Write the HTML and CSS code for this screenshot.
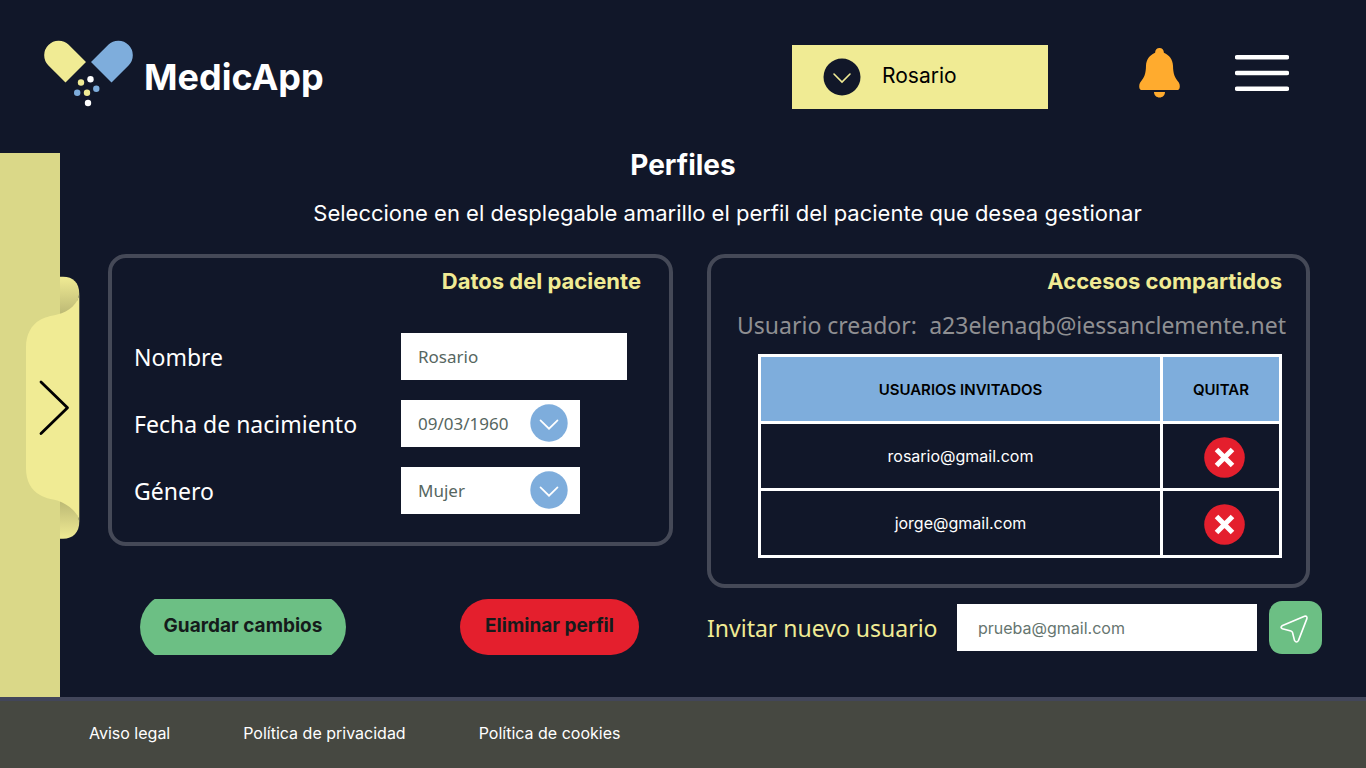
FILE: index.html
```html
<!DOCTYPE html>
<html lang="es">
<head>
<meta charset="utf-8">
<meta name="viewport" content="width=device-width, initial-scale=1">
<title>MedicApp - Perfiles</title>
<link rel="stylesheet" href="styles.css">
</head>
<body>
<header class="header">
  <a class="brand" href="#">
    <svg class="brand-logo" viewBox="44 40 90 67" aria-hidden="true">
      <path fill="#f0eb94" d="M68.7 44.7 86 62 65.5 82.5 48.2 65.2A14.5 14.5 0 0 1 68.7 44.7z"/>
      <path fill="#7eaddc" d="M108.3 44.7 91 62l20.5 20.5 17.3-17.3A14.5 14.5 0 0 0 108.3 44.7z"/>
      <circle cx="81" cy="82.5" r="3.2" fill="#f0eb94"/>
      <circle cx="90.5" cy="79.2" r="3.2" fill="#fff"/>
      <circle cx="77.2" cy="92.7" r="3.2" fill="#7eaddc"/>
      <circle cx="87" cy="92.7" r="3.2" fill="#f0eb94"/>
      <circle cx="96.3" cy="88.7" r="3.2" fill="#7eaddc"/>
      <circle cx="88" cy="103" r="3.2" fill="#fff"/>
    </svg>
    <span class="brand-name">MedicApp</span>
  </a>
  <div class="profile">
    <svg class="profile-chevron" viewBox="0 0 38 38" aria-hidden="true">
      <circle cx="19" cy="19" r="18.5" fill="#111729"/>
      <path d="M11 16l8 8 8-8" fill="none" stroke="#f0eb94" stroke-width="1.6" stroke-linecap="round"/>
    </svg>
    <select class="profile-select" aria-label="Perfil del paciente"><option>Rosario</option></select>
  </div>
  <div class="header-icons">
    <button class="icon-button" type="button" aria-label="Notificaciones">
      <svg viewBox="0 0 41 50" width="41" height="50" aria-hidden="true">
        <path fill="#ffab2e" d="M20.5 0c-2.6 0-4.4 2-4.4 4.7C10.600 7 7.300 11.500 7 17.700 6.800 26 5.500 29 1.200 34.500-.5 37 0 42 2.500 42h36c2.500 0 3-5 1.300-7.500C35.500 29 34.200 26 34 17.700c-.3-6.200-3.600-10.700-9.100-13C24.900 2 23.100 0 20.500 0z"/>
        <path fill="#ffab2e" d="M15 44h11c0 3.400-2.500 5.500-5.500 5.500S15 47.400 15 44z"/>
      </svg>
    </button>
    <button class="icon-button" type="button" aria-label="Menú">
      <svg viewBox="0 0 54 36" width="54" height="36" aria-hidden="true">
        <path d="M2 2.300h50M2 18h50M2 33.700h50" stroke="#fff" stroke-width="4.500" stroke-linecap="round"/>
      </svg>
    </button>
  </div>
</header>

<div class="shell">
  <aside class="sidebar">
    <button class="sidebar-tab" type="button" aria-label="Abrir panel lateral">
      <svg viewBox="26 276 54 263" width="54" height="263" aria-hidden="true">
        <defs>
          <linearGradient id="fold-top" x1="0" y1="0" x2="0" y2="1"><stop offset="0" stop-color="#f0eb94"/><stop offset="1" stop-color="#b9b673"/></linearGradient>
          <linearGradient id="fold-bottom" x1="0" y1="1" x2="0" y2="0"><stop offset="0" stop-color="#f0eb94"/><stop offset="1" stop-color="#b9b673"/></linearGradient>
        </defs>
        <path fill="url(#fold-top)" d="M60 276.800h3c10 0 16.300 6 16.300 17.200L75 310l-15 6z"/>
        <path fill="url(#fold-bottom)" d="M60 538.700h3c10 0 16.300-6 16.300-17.200L75 505l-15-6z"/>
        <path fill="#f0eb94" d="M79.300 294c-1 9-10 18-22 20.500C49 316.500 45 317 40 320c-9 5-14 15-14 27v121c0 13 5 22 14 27 5 3 9 3.500 17.300 5.500 11 4 21 12 22 21z"/>
        <path d="M41 382l26.500 25.700L41 433.500" fill="none" stroke="#000" stroke-width="2.800" stroke-linecap="round" stroke-linejoin="round"/>
      </svg>
    </button>
  </aside>

  <main class="main">
    <h1 class="title">Perfiles</h1>
    <p class="subtitle">Seleccione en el desplegable amarillo el perfil del paciente que desea gestionar</p>

    <div class="columns">
      <form class="patient">
        <section class="panel patient-panel">
          <h2 class="panel-title">Datos del paciente</h2>
          <div class="fields">
            <label class="label" for="name">Nombre</label>
            <input class="field field-wide" id="name" type="text" value="Rosario">
            <label class="label" for="birth">Fecha de nacimiento</label>
            <div class="picker">
              <input class="field" id="birth" type="text" value="09/03/1960">
              <button class="picker-icon" type="button" aria-label="Elegir fecha">
                <svg viewBox="0 0 38 38" width="38" height="38" aria-hidden="true"><circle cx="19" cy="19" r="18.700" fill="#7eaddc"/><path d="M10.500 16.300l8.500 8.400 8.500-8.400" fill="none" stroke="#fff" stroke-width="1.700" stroke-linecap="round"/></svg>
              </button>
            </div>
            <label class="label" for="gender">Género</label>
            <div class="picker">
              <select class="field" id="gender"><option>Mujer</option></select>
              <span class="picker-icon">
                <svg viewBox="0 0 38 38" width="38" height="38" aria-hidden="true"><circle cx="19" cy="19" r="18.700" fill="#7eaddc"/><path d="M10.500 16.300l8.500 8.400 8.500-8.400" fill="none" stroke="#fff" stroke-width="1.700" stroke-linecap="round"/></svg>
              </span>
            </div>
          </div>
        </section>
        <div class="actions">
          <button class="pill pill-save" type="submit"><span>Guardar cambios</span></button>
          <button class="pill pill-delete" type="button"><span>Eliminar perfil</span></button>
        </div>
      </form>

      <div class="sharing">
        <section class="panel sharing-panel">
          <h2 class="panel-title">Accesos compartidos</h2>
          <p class="creator"><span>Usuario creador:</span><span>a23elenaqb@iessanclemente.net</span></p>
          <table class="guests">
            <thead>
              <tr><th scope="col">USUARIOS INVITADOS</th><th class="guests-remove" scope="col">QUITAR</th></tr>
            </thead>
            <tbody>
              <tr>
                <td>rosario@gmail.com</td>
                <td><button class="icon-button remove" type="button" aria-label="Quitar rosario@gmail.com"><svg viewBox="0 0 41 41" width="41" height="41" aria-hidden="true"><circle cx="20.500" cy="20.500" r="20.300" fill="#e41f2d"/><path d="M12.500 12.500l16 16M28.500 12.500l-16 16" stroke="#fff" stroke-width="5"/></svg></button></td>
              </tr>
              <tr>
                <td>jorge@gmail.com</td>
                <td><button class="icon-button remove" type="button" aria-label="Quitar jorge@gmail.com"><svg viewBox="0 0 41 41" width="41" height="41" aria-hidden="true"><circle cx="20.500" cy="20.500" r="20.300" fill="#e41f2d"/><path d="M12.500 12.500l16 16M28.500 12.500l-16 16" stroke="#fff" stroke-width="5"/></svg></button></td>
              </tr>
            </tbody>
          </table>
        </section>
        <form class="invite">
          <label class="invite-label" for="invite">Invitar nuevo usuario</label>
          <input class="invite-input" id="invite" type="email" placeholder="prueba@gmail.com">
          <button class="invite-send" type="submit" aria-label="Enviar invitación">
            <svg viewBox="0 0 52 52" width="52" height="52" aria-hidden="true"><path d="M13 23.800 35.500 14.300q3-.8 2.400 2.300L29.500 38.400q-1.900 3.200-4 0L23.500 30.500q-.5-1.200-1.600-1.500l-8.500-2.200q-2.500-1.300-.4-3z" fill="none" stroke="#fff" stroke-width="1.600" stroke-linejoin="round"/></svg>
          </button>
        </form>
      </div>
    </div>
  </main>
</div>

<footer class="footer">
  <a href="#">Aviso legal</a>
  <a href="#">Política de privacidad</a>
  <a href="#">Política de cookies</a>
</footer>
</body>
</html>
```
FILE: styles.css
```css
:root {
  --night: #111729;
  --yellow: #f0eb94;
  --blue: #7eaddc;
  --green: #6cbf84;
  --red: #e41f2d;
  --line: #454957;
  --geometric: Inter, "Liberation Sans", sans-serif;
  --humanist: "Noto Sans", "Open Sans", sans-serif;
}

* { box-sizing: border-box; }

body {
  margin: 0;
  min-height: 100vh;
  display: flex;
  flex-direction: column;
  background: var(--night);
  color: #fff;
  font-family: var(--geometric);
}

h1, h2, p { margin: 0; }

button, input, select { font: inherit; border: 0; margin: 0; }

button { cursor: pointer; }

svg { display: block; }

.icon-button { padding: 0; background: none; }

/* Header */
.header {
  display: flex;
  align-items: flex-start;
  padding: 40px 77px 44px 44px;
}

.brand {
  display: flex;
  align-items: center;
  gap: 10px;
  margin-right: auto;
  color: #fff;
  text-decoration: none;
}

.brand-logo { width: 90px; height: 67px; }

.brand-name { font-size: 36px; font-weight: 700; line-height: 44px; padding-top: 6px; }

.profile { position: relative; width: 256px; margin: 5px 91px 0 0; }

.profile-select {
  appearance: none;
  display: block;
  width: 100%;
  height: 64px;
  padding: 0 20px 4px 90px;
  border-radius: 0;
  background: var(--yellow);
  color: #000;
  font-size: 21px;
}

.profile-chevron {
  position: absolute;
  left: 31px;
  top: 13px;
  width: 38px;
  height: 38px;
  pointer-events: none;
}

.header-icons {
  display: flex;
  align-items: center;
  gap: 55px;
  height: 66px;
}

/* Sidebar */
.shell { flex: 1; display: flex; }

.sidebar { position: relative; flex: 0 0 60px; background: #dad888; }

.sidebar-tab {
  position: absolute;
  left: 26px;
  top: 123px;
  padding: 0;
  background: none;
}

/* Main */
.main { flex: 1; min-width: 0; padding: 0 44px 42px 48px; }

.title {
  padding: 0 64px 0 0;
  font-size: 28px;
  line-height: 24px;
  text-align: center;
}

.subtitle {
  padding: 20px 0 25px 25px;
  font-size: 22px;
  line-height: 32px;
  text-align: center;
}

.columns {
  display: grid;
  grid-template-columns: minmax(0, 565fr) minmax(0, 615fr);
  gap: 34px;
  align-items: start;
}

.panel { border: 4px solid var(--line); border-radius: 18px; }

.panel-title {
  color: var(--yellow);
  font-size: 22px;
  line-height: 26px;
  text-align: right;
}

.patient-panel { padding: 10px 28px 28px 22px; }

.fields {
  display: grid;
  grid-template-columns: 267px minmax(0, 1fr);
  row-gap: 20px;
  align-items: center;
  padding-top: 39px;
}

.label { font-family: var(--humanist); font-size: 23px; line-height: 32px; }

.field {
  appearance: none;
  display: block;
  width: 100%;
  height: 47px;
  padding: 0 17px;
  border-radius: 0;
  background: #fff;
  color: #56665f;
  font-family: var(--humanist);
  font-size: 17px;
}

.field-wide { max-width: 226px; }

.picker { position: relative; max-width: 179px; }

.picker-icon {
  position: absolute;
  right: 12px;
  top: 4px;
  padding: 0;
  background: none;
}

span.picker-icon { pointer-events: none; }

.actions {
  display: flex;
  justify-content: space-between;
  padding: 53px 34px 0 32px;
}

.pill {
  position: relative;
  height: 56px;
  padding: 0 20px 4px;
  border-radius: 28px;
  color: #151b1b;
  font-size: 19px;
  font-weight: 700;
}

.pill-save { min-width: 206px; background: none; border-radius: 0; overflow: hidden; }

.pill-save span { position: relative; }

/* Taller than the button, so the top and bottom of the capsule are cut flat */
.pill-save::before {
  content: "";
  position: absolute;
  inset: -6px 0;
  border-radius: 34px;
  background: var(--green);
}

.pill-delete { min-width: 179px; background: var(--red); }

.sharing-panel { margin-right: 12px; padding: 10px 20px 26px 26px; }

.sharing-panel .panel-title { padding-right: 4px; }

.creator {
  display: flex;
  justify-content: space-between;
  padding: 15px 0 13px;
  color: #8f8f92;
  font-family: var(--humanist);
  font-size: 23px;
  line-height: 32px;
}

.guests {
  width: calc(100% - 25px);
  margin-left: 21px;
  border-collapse: collapse;
  font-size: 16px;
  text-align: center;
}

.guests th, .guests td {
  height: 67px;
  padding: 0;
  border: 3px solid #fff;
}

.guests th { background: var(--blue); color: #000; font-size: 15px; font-weight: 600; }

.guests-remove { width: 119px; }

.guests td:last-child { padding: 2px 0 0 6px; }

.remove { display: block; margin: 0 auto; }

.invite {
  display: grid;
  grid-template-columns: 1fr 300px 53px;
  column-gap: 12px;
  align-items: center;
  padding-top: 13px;
}

.invite-label { color: var(--yellow); font-family: var(--humanist); font-size: 23px; line-height: 32px; }

.invite-input {
  width: 100%;
  height: 47px;
  padding: 0 21px;
  background: #fff;
  color: #56665f;
  font-size: 16px;
}

.invite-input::placeholder { color: #66756f; opacity: 1; }

.invite-send {
  height: 53px;
  padding: 0;
  border-radius: 13px;
  background: var(--green);
}

/* Footer */
.footer {
  display: flex;
  gap: 73px;
  padding: 22px 89px 24px;
  border-top: 4px solid #42465a;
  background: #464841;
  font-size: 16px;
  line-height: 21px;
}

.footer a { color: #fff; text-decoration: none; }
```
